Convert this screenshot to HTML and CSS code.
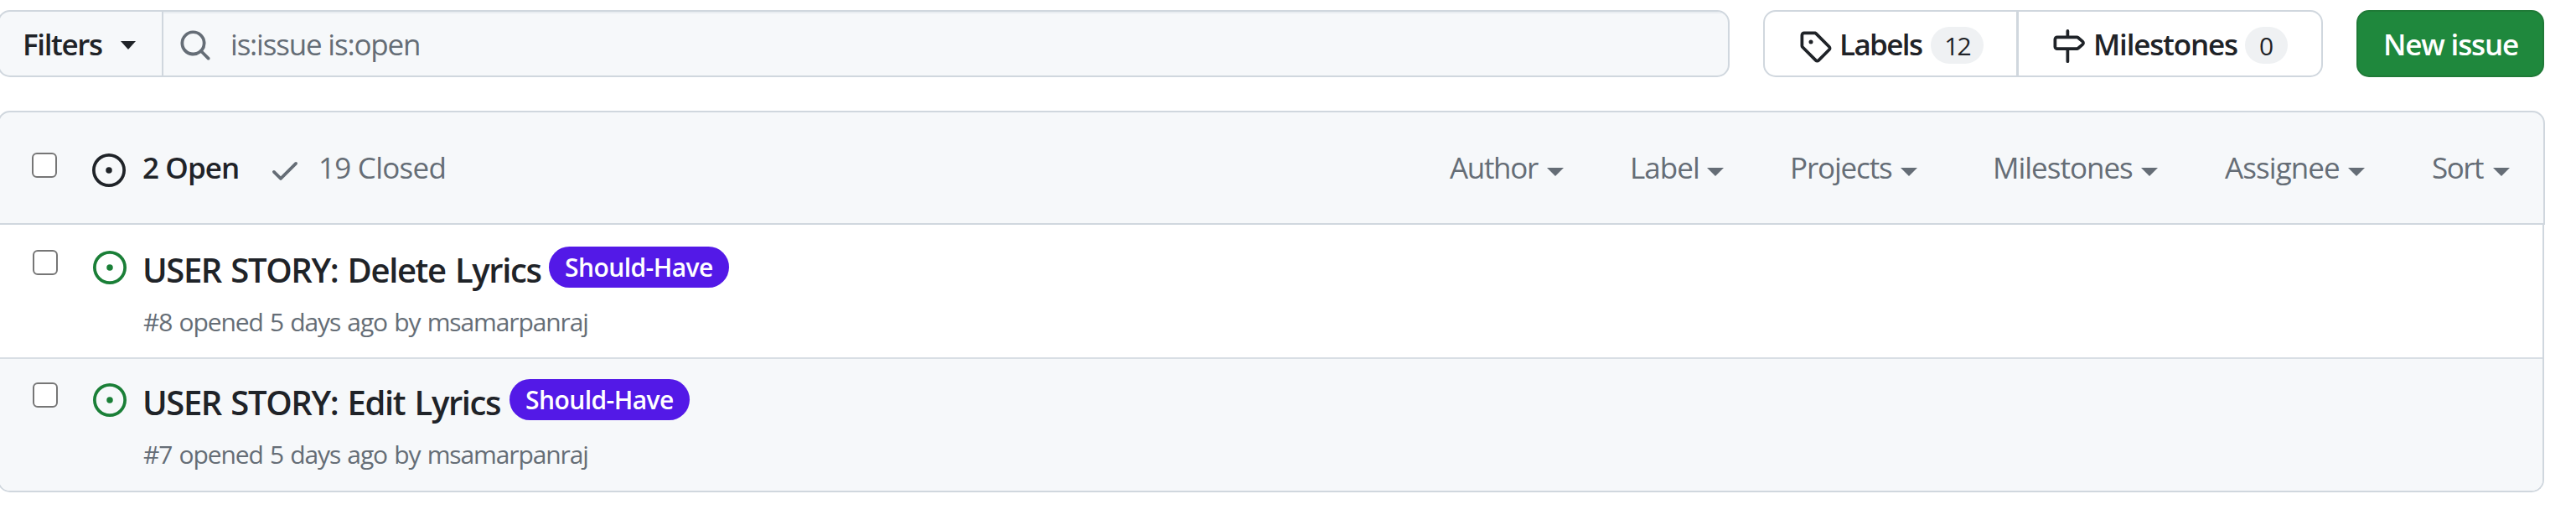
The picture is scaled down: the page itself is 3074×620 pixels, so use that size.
FILE: index.html
```html
<!DOCTYPE html>
<html lang="en">
<head>
<meta charset="utf-8">
<title>Issues</title>
<link rel="stylesheet" href="styles.css">
</head>
<body>
<svg class="sprite" aria-hidden="true">
  <symbol id="opened" viewBox="0 0 16 16"><path d="M8 9.5a1.5 1.5 0 1 0 0-3 1.5 1.5 0 0 0 0 3Z"/><path d="M8 0a8 8 0 1 1 0 16A8 8 0 0 1 8 0ZM1.5 8a6.5 6.5 0 1 0 13 0 6.5 6.5 0 0 0-13 0Z"/></symbol>
</svg>
<div class="page">
  <div class="toolbar">
    <div class="search">
      <button class="filters"><span class="filters-text">Filters</span><i class="caret caret-dark"></i></button>
      <div class="query">
        <svg class="icon" viewBox="0 0 16 16"><path d="M10.68 11.74a6 6 0 0 1-7.922-8.982 6 6 0 0 1 8.982 7.922l3.04 3.04a.749.749 0 0 1-.326 1.275.749.749 0 0 1-.734-.215ZM11.5 7a4.499 4.499 0 1 0-8.997 0A4.499 4.499 0 0 0 11.5 7Z"/></svg>
        <span class="query-text">is:issue is:open</span>
      </div>
    </div>
    <div class="group">
      <a class="group-item labels">
        <svg class="icon" viewBox="0 0 16 16"><path d="M1 7.775V2.75C1 1.784 1.784 1 2.75 1h5.025c.464 0 .91.184 1.238.513l6.25 6.25a1.75 1.75 0 0 1 0 2.474l-5.026 5.026a1.75 1.75 0 0 1-2.474 0l-6.25-6.25A1.752 1.752 0 0 1 1 7.775Zm1.5 0c0 .066.026.13.073.177l6.25 6.25a.25.25 0 0 0 .354 0l5.025-5.025a.25.25 0 0 0 0-.354l-6.25-6.25a.25.25 0 0 0-.177-.073H2.75a.25.25 0 0 0-.25.25ZM6 5a1 1 0 1 1 0 2 1 1 0 0 1 0-2Z"/></svg>
        <span class="labels-text">Labels</span><span class="count count-wide">12</span>
      </a>
      <a class="group-item milestones">
        <svg class="icon" viewBox="0 0 16 16"><path d="M7.75 0a.75.75 0 0 1 .75.75V3h3.634c.414 0 .814.147 1.13.414l2.07 1.75a1.75 1.75 0 0 1 0 2.672l-2.07 1.75a1.75 1.75 0 0 1-1.13.414H8.5v5.25a.75.75 0 0 1-1.5 0V10H2.75A1.75 1.75 0 0 1 1 8.25v-3.5C1 3.784 1.784 3 2.75 3H7V.75A.75.75 0 0 1 7.75 0Zm4.384 8.5a.25.25 0 0 0 .161-.06l2.07-1.75a.248.248 0 0 0 0-.38l-2.07-1.75a.25.25 0 0 0-.161-.06H2.75a.25.25 0 0 0-.25.25v3.5c0 .138.112.25.25.25h9.384Z"/></svg>
        <span class="milestones-text">Milestones</span><span class="count">0</span>
      </a>
    </div>
    <a class="new-issue">New issue</a>
  </div>

  <div class="box">
    <div class="box-header">
      <span class="checkbox"></span>
      <svg class="icon icon-open"><use href="#opened"/></svg>
      <span class="open-text">2 Open</span>
      <svg class="icon icon-check" viewBox="0 0 16 16"><path d="M13.78 4.22a.75.75 0 0 1 0 1.06l-7.25 7.25a.75.75 0 0 1-1.06 0L2.22 9.28a.751.751 0 0 1 .018-1.042.751.751 0 0 1 1.042-.018L6 10.94l6.72-6.72a.75.75 0 0 1 1.06 0Z"/></svg>
      <span class="closed-text">19 Closed</span>
      <div class="menus">
        <span class="menu author"><span>Author</span><i class="caret"></i></span>
        <span class="menu label"><span>Label</span><i class="caret"></i></span>
        <span class="menu projects"><span>Projects</span><i class="caret"></i></span>
        <span class="menu milestone"><span>Milestones</span><i class="caret"></i></span>
        <span class="menu assignee"><span>Assignee</span><i class="caret"></i></span>
        <span class="menu sort"><span>Sort</span><i class="caret"></i></span>
      </div>
    </div>
    <div class="rows">
      <div class="row">
        <span class="checkbox"></span>
        <svg class="icon icon-issue"><use href="#opened"/></svg>
        <div class="issue">
          <div class="title"><span class="title-text title-delete">USER STORY: Delete Lyrics</span><span class="badge">Should-Have</span></div>
          <div class="meta">#8 opened 5 days ago by msamarpanraj</div>
        </div>
      </div>
      <div class="row row-active">
        <span class="checkbox"></span>
        <svg class="icon icon-issue"><use href="#opened"/></svg>
        <div class="issue">
          <div class="title"><span class="title-text title-edit">USER STORY: Edit Lyrics</span><span class="badge">Should-Have</span></div>
          <div class="meta">#7 opened 5 days ago by msamarpanraj</div>
        </div>
      </div>
    </div>
  </div>
</div>
</body>
</html>
```
FILE: styles.css
```css
* { box-sizing: border-box; }

body {
  margin: 0;
  overflow: hidden;
  background: #fff;
  color: #1f2328;
  font-family: "Open Sans", "Noto Sans", sans-serif;
  font-size: 35px;
  line-height: 52px;
  white-space: nowrap;
}

.sprite { display: none; }

/* The page is scrolled 3px to the right, so its left border is cut off. */
.page { width: 3040px; margin-left: -3px; padding-top: 12px; }

.icon { width: 40px; height: 40px; flex: none; fill: currentColor; }

.caret {
  flex: none;
  border: 10px solid transparent;
  border-top-color: currentColor;
  border-bottom-width: 0;
}
.caret-dark { margin-top: 4px; border-left-width: 9.5px; border-right-width: 9.5px; }

/* Toolbar */
.toolbar { display: flex; height: 80px; font-weight: 600; }

.search {
  display: flex;
  width: 2067px;
  margin-right: 40px;
  border: 2px solid #d0d7de;
  border-radius: 15px;
  background: #f6f8fa;
  overflow: hidden;
}
.filters {
  display: flex;
  align-items: center;
  width: 196px;
  padding: 0 0 0 28px;
  border: 0;
  border-right: 2px solid #d0d7de;
  background: none;
  color: inherit;
  font: inherit;
}
.filters-text { width: 117px; padding-top: 2px; letter-spacing: -1.38px; text-align: left; }
.query {
  display: flex;
  flex: 1;
  align-items: center;
  padding-left: 18px;
  box-shadow: inset 0 2px 1px #e9edf1;
  color: #656d76;
  font-weight: 400;
}
.query .icon { margin-top: 4px; }
.query-text { margin-left: 22px; padding-top: 2px; letter-spacing: -1.2px; }

.group {
  display: flex;
  width: 668px;
  margin-right: 40px;
  border: 2px solid #d0d7de;
  border-radius: 15px;
}
.group-item { display: flex; align-items: center; }
.group .icon { margin-top: 6px; }
.labels { width: 303px; padding-left: 39.5px; border-right: 3px solid #d0d7de; }
.labels-text { width: 109px; margin-left: 9.5px; padding-top: 2px; letter-spacing: -1.61px; }
.milestones { padding-left: 39px; }
.milestones-text { width: 181px; margin-left: 10px; padding-top: 2px; letter-spacing: -1.17px; }
.count {
  width: 51px;
  height: 44px;
  margin-top: 4px;
  border-radius: 22px;
  background: #eff1f3;
  font-size: 30px;
  font-weight: 500;
  line-height: 45px;
  text-align: center;
}
.count-wide { width: 63px; letter-spacing: -2px; }

.new-issue {
  width: 224px;
  border: 2px solid #1f7a37;
  border-radius: 15px;
  background: #1f883d;
  color: #fff;
  letter-spacing: -1.16px;
  line-height: 78px;
  padding-left: 30px;
}

/* Issue list */
.box { margin-top: 40px; }

.checkbox {
  width: 30px;
  height: 30px;
  flex: none;
  border: 2px solid #767676;
  border-radius: 6px;
  background: #fff;
}

.box-header {
  display: flex;
  align-items: center;
  height: 136px;
  padding-left: 39px;
  border: 2px solid #d0d7de;
  border-radius: 15px 15px 0 0;
  background: #f6f8fa;
  color: #656d76;
}
.box-header .checkbox { margin-bottom: 6px; }
.icon-open { margin: 5px 0 0 42px; color: #1f2328; }
.open-text {
  width: 150px;
  margin-left: 20px;
  color: #1f2328;
  font-weight: 600;
  letter-spacing: -.92px;
}
.icon-check { margin-top: 6px; }
.closed-text { margin-left: 20px; letter-spacing: -.75px; }

.menus { display: flex; margin-left: auto; padding-right: 40px; }
.menu { display: flex; align-items: center; justify-content: space-between; }
.menu .caret { margin-top: 9px; }
.author { width: 136px; margin-right: 79px; letter-spacing: -1.32px; }
.label { width: 112px; margin-right: 79px; letter-spacing: -.95px; }
.projects { width: 152px; margin-right: 90px; letter-spacing: -1.16px; }
.milestone { width: 197px; margin-right: 80px; letter-spacing: -1.01px; }
.assignee { width: 167px; margin-right: 80px; letter-spacing: -.92px; }
.sort { width: 93px; letter-spacing: -1.52px; }

.rows {
  width: 3039px;
  height: 319px;
  border: 2px solid #d0d7de;
  border-top: 0;
  border-radius: 0 0 15px 15px;
  overflow: hidden;
}
.row { display: flex; height: 158px; padding: 24px 0 0 40px; }
.row-active {
  height: 159px;
  padding-top: 22px;
  border-top: 2px solid #d8dee4;
  background: #f6f8fa;
}
.row .checkbox { margin-top: 6px; }
.icon-issue { margin: 7px 0 0 42px; color: #1a7f37; }
.issue { margin-left: 17px; }
.title {
  display: flex;
  height: 69px;
  font-size: 40px;
  font-weight: 600;
  line-height: 60px;
}
.title-text { padding-left: 2px; letter-spacing: -1.4px; word-spacing: 2.4px; }
.title-delete { width: 487px; }
.title-edit { width: 440px; }
.badge {
  width: 215px;
  height: 49px;
  margin-top: 2px;
  padding-left: 19px;
  border-radius: 25px;
  background: #5319e7;
  color: #fff;
  font-size: 30px;
  letter-spacing: -.56px;
  line-height: 49px;
}
.meta {
  padding-left: 3px;
  color: #656d76;
  font-size: 30px;
  letter-spacing: -1.1px;
  line-height: 45px;
  word-spacing: 1.5px;
}
```
